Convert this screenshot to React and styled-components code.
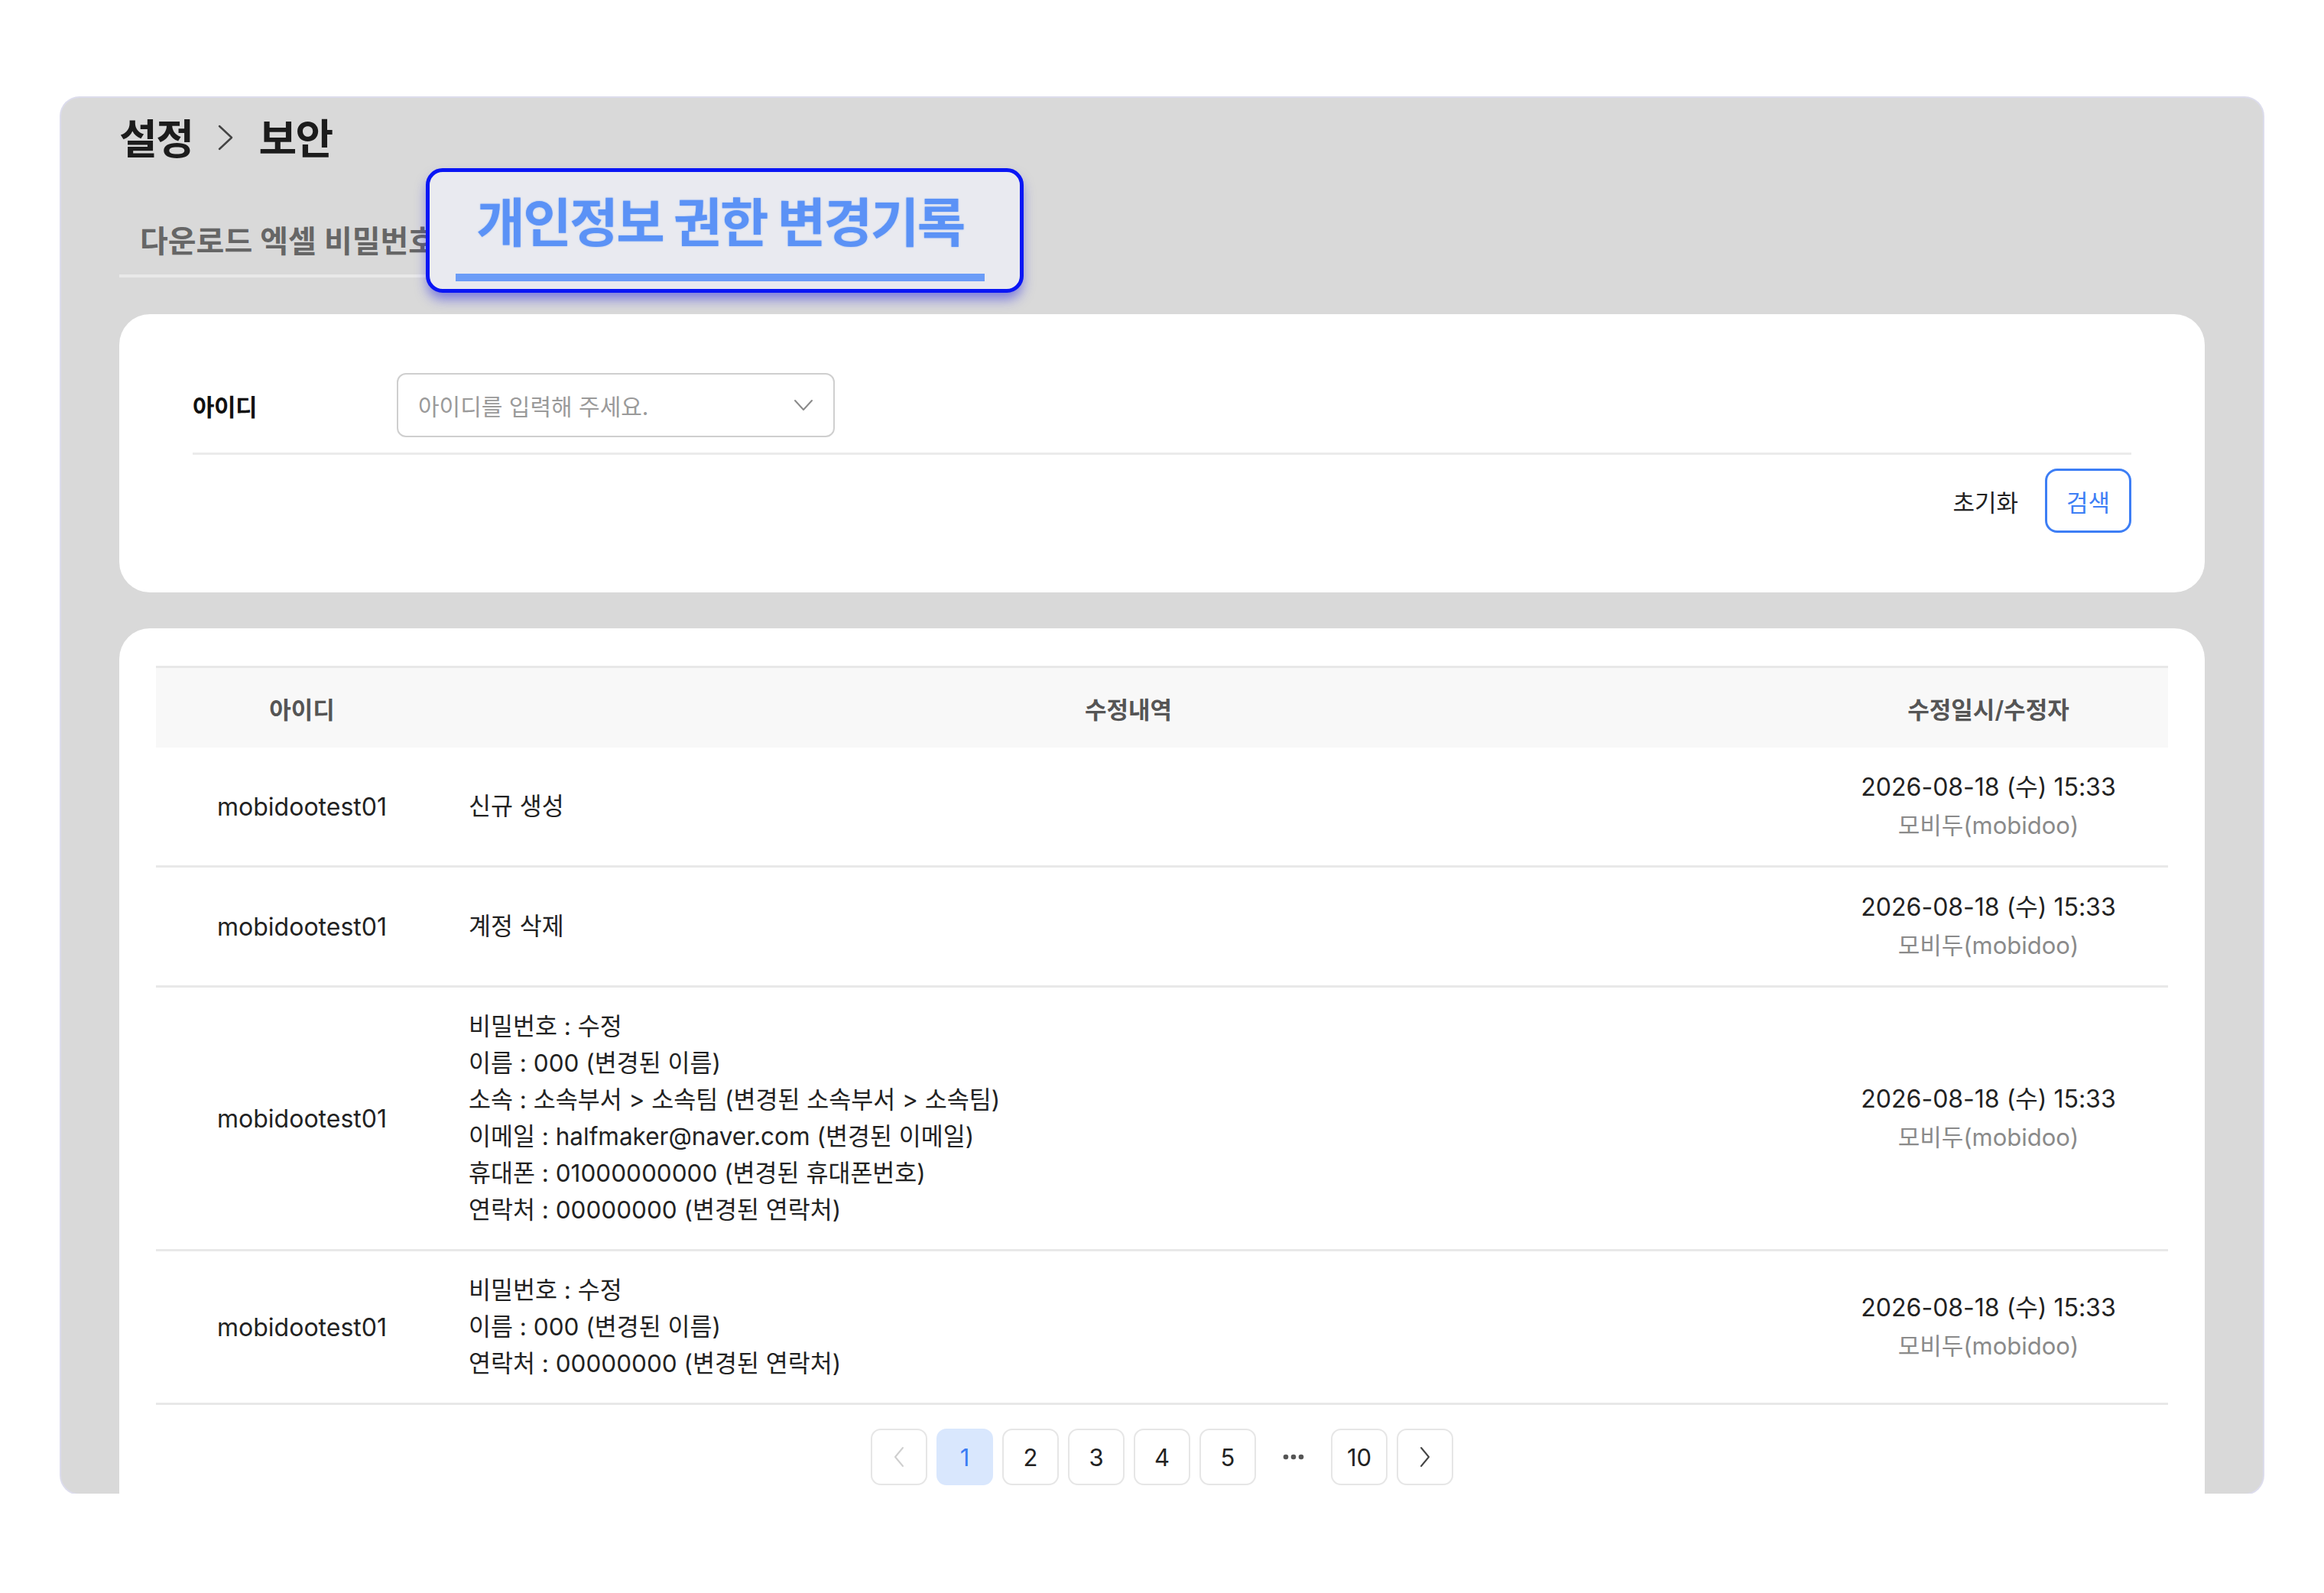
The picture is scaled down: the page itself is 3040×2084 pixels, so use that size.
import React from 'react';
import styled, { createGlobalStyle } from 'styled-components';

const rows = [
  { id: 'mobidootest01', lines: ['신규 생성'] },
  { id: 'mobidootest01', lines: ['계정 삭제'] },
  {
    id: 'mobidootest01',
    lines: [
      '비밀번호 : 수정',
      '이름 : 000 (변경된 이름)',
      '소속 : 소속부서 > 소속팀 (변경된 소속부서 > 소속팀)',
      '이메일 : halfmaker@naver.com (변경된 이메일)',
      '휴대폰 : 01000000000 (변경된 휴대폰번호)',
      '연락처 : 00000000 (변경된 연락처)',
    ],
  },
  {
    id: 'mobidootest01',
    lines: ['비밀번호 : 수정', '이름 : 000 (변경된 이름)', '연락처 : 00000000 (변경된 연락처)'],
  },
];

const pages = ['1', '2', '3', '4', '5', '...', '10'];

const Chevron = ({ dir = 'right', color = '#444', w = 16, h = 28, sw = 2.5 }) => {
  const d = {
    right: `M3 2 L${w - 3} ${h / 2} L3 ${h - 2}`,
    left: `M${w - 3} 2 L3 ${h / 2} L${w - 3} ${h - 2}`,
    down: `M2 2 L${w / 2} ${h - 2} L${w - 2} 2`,
  }[dir];
  return (
    <svg width={w} height={h} viewBox={`0 0 ${w} ${h}`} fill="none">
      <path d={d} stroke={color} strokeWidth={sw} strokeLinecap="round" strokeLinejoin="round" />
    </svg>
  );
};

export default function App() {
  return (
    <>
      <GlobalStyle />
      <Panel>
        <Breadcrumb>
          설정
          <Chevron dir="right" color="#444" w={22} h={34} sw={2.5} />
          보안
        </Breadcrumb>

        <TabRow>
          <Tab>다운로드 엑셀 비밀번호</Tab>
          <Callout>
            <CalloutText>개인정보 권한 변경기록</CalloutText>
            <CalloutBar />
          </Callout>
        </TabRow>

        <FilterCard>
          <FieldRow>
            <FieldLabel>아이디</FieldLabel>
            <Select>
              <span>아이디를 입력해 주세요.</span>
              <Chevron dir="down" color="#8a8a8a" w={26} h={16} sw={2} />
            </Select>
          </FieldRow>
          <Actions>
            <ResetButton>초기화</ResetButton>
            <SearchButton>검색</SearchButton>
          </Actions>
        </FilterCard>

        <TableCard>
          <HeadRow>
            <HeadCell>아이디</HeadCell>
            <HeadCell>수정내역</HeadCell>
            <HeadCell>수정일시/수정자</HeadCell>
          </HeadRow>
          {rows.map((row, idx) => (
            <BodyRow key={idx}>
              <IdCell>{row.id}</IdCell>
              <ChangeCell>
                {row.lines.map((line) => (
                  <div key={line}>{line}</div>
                ))}
              </ChangeCell>
              <DateCell>
                <div>2026-08-18 (수) 15:33</div>
                <Editor>모비두(mobidoo)</Editor>
              </DateCell>
            </BodyRow>
          ))}
          <Pagination>
            <PageButton disabled>
              <Chevron dir="left" color="#cfcfcf" w={16} h={28} sw={2} />
            </PageButton>
            {pages.map((p) =>
              p === '...' ? (
                <Dots key={p}>
                  <svg width="28" height="8" viewBox="0 0 28 8">
                    <circle cx="4" cy="4" r="3.3" fill="#555" />
                    <circle cx="14" cy="4" r="3.3" fill="#555" />
                    <circle cx="24" cy="4" r="3.3" fill="#555" />
                  </svg>
                </Dots>
              ) : (
                <PageButton key={p} active={p === '1'}>
                  {p}
                </PageButton>
              )
            )}
            <PageButton>
              <Chevron dir="right" color="#444" w={16} h={28} sw={2} />
            </PageButton>
          </Pagination>
        </TableCard>
      </Panel>
    </>
  );
}

const GlobalStyle = createGlobalStyle`
  * { box-sizing: border-box; }
  body {
    margin: 0;
    background: #fff;
    font-family: Inter, "Noto Sans CJK KR", sans-serif;
    color: #222;
  }
`;

const Panel = styled.div`
  position: relative;
  margin: 128px 0 0 80px;
  width: 2880px;
  height: 1826px;
  padding: 18px 76px 0;
  background: #d9d9d9;
  border-radius: 24px;
  box-shadow: 0 0 0 2px #dcdcec;
  overflow: hidden;
`;

const Breadcrumb = styled.div`
  display: flex;
  align-items: center;
  gap: 32px;
  height: 64px;
  font-size: 54px;
  font-weight: 700;
  letter-spacing: -1.5px;
  color: #1c1c1c;
  svg {
    margin-top: 4px;
  }
`;

const TabRow = styled.div`
  display: flex;
  margin-top: 83px;
`;

const Tab = styled.div`
  padding: 0 27px 20px;
  border-bottom: 4px solid #e9e9e9;
  font-size: 40px;
  line-height: 46px;
  font-weight: 600;
  color: #666;
  white-space: nowrap;
`;

const Callout = styled.div`
  position: absolute;
  left: 477px;
  top: 92px;
  width: 782px;
  height: 163px;
  padding: 26px 46px 0 34px;
  background: #e9eaf0;
  border: 5px solid #0a16f5;
  border-radius: 22px;
  box-shadow: 0 10px 16px -2px rgba(40, 40, 225, 0.55);
  display: flex;
  flex-direction: column;
  align-items: center;
`;

const CalloutText = styled.div`
  font-size: 69px;
  line-height: 82px;
  font-weight: 700;
  letter-spacing: -2.5px;
  color: #5b92f6;
  text-shadow: 0 0 2px rgba(91, 146, 246, 0.6);
`;

const CalloutBar = styled.div`
  align-self: stretch;
  height: 10px;
  margin-top: 25px;
  background: #6b9cf7;
`;

const FilterCard = styled.div`
  margin-top: 48px;
  padding: 77px 96px 78px;
  background: #fff;
  border-radius: 40px;
`;

const FieldRow = styled.div`
  display: flex;
  align-items: center;
  padding-bottom: 20px;
  border-bottom: 3px solid #ebebeb;
`;

const FieldLabel = styled.div`
  width: 267px;
  font-size: 31px;
  font-weight: 700;
  letter-spacing: -0.5px;
  color: #111;
`;

const Select = styled.div`
  display: flex;
  align-items: center;
  justify-content: space-between;
  width: 573px;
  height: 84px;
  padding: 0 26px;
  border: 2px solid #cfcfcf;
  border-radius: 12px;
  font-size: 30px;
  color: #9a9a9a;
`;

const Actions = styled.div`
  display: flex;
  justify-content: flex-end;
  align-items: center;
  gap: 35px;
  margin-top: 18px;
`;

const ResetButton = styled.button`
  border: none;
  background: none;
  padding: 0;
  font-family: inherit;
  font-size: 31px;
  color: #222;
`;

const SearchButton = styled.button`
  width: 113px;
  height: 84px;
  border: 3px solid #3d7ef5;
  border-radius: 16px;
  background: #fff;
  font-family: inherit;
  font-size: 31px;
  color: #3d7ef5;
`;

const TableCard = styled.div`
  margin-top: 47px;
  padding: 49px 48px 48px;
  background: #fff;
  border-radius: 40px;
`;

const grid = `
  display: grid;
  grid-template-columns: 382px 1780px 470px;
  align-items: center;
`;

const HeadRow = styled.div`
  ${grid}
  height: 107px;
  border-top: 3px solid #e8e8e8;
  background: #f8f8f8;
`;

const HeadCell = styled.div`
  text-align: center;
  font-size: 31px;
  font-weight: 600;
  color: #555;
`;

const BodyRow = styled.div`
  ${grid}
  padding: 27px 0;
  border-bottom: 3px solid #e8e8e8;
`;

const IdCell = styled.div`
  text-align: center;
  font-size: 32px;
  color: #222;
`;

const ChangeCell = styled.div`
  padding-left: 27px;
  font-size: 31.5px;
  line-height: 48px;
  color: #222;
`;

const DateCell = styled.div`
  text-align: center;
  font-size: 32px;
  line-height: 50px;
  color: #222;
`;

const Editor = styled.div`
  color: #8a8a8a;
  font-size: 31px;
`;

const Pagination = styled.div`
  display: flex;
  justify-content: center;
  gap: 12px;
  margin-top: 31px;
`;

const PageButton = styled.button`
  display: flex;
  align-items: center;
  justify-content: center;
  width: 74px;
  height: 74px;
  padding: 0;
  border: 2px solid ${({ active }) => (active ? '#d9e7fd' : '#e6e6e6')};
  border-radius: 13px;
  background: ${({ active }) => (active ? '#d9e7fd' : '#fff')};
  font-family: inherit;
  font-size: 31px;
  color: ${({ active }) => (active ? '#3a7cf4' : '#222')};
`;

const Dots = styled.div`
  display: flex;
  align-items: center;
  justify-content: center;
  width: 74px;
  height: 74px;
`;
